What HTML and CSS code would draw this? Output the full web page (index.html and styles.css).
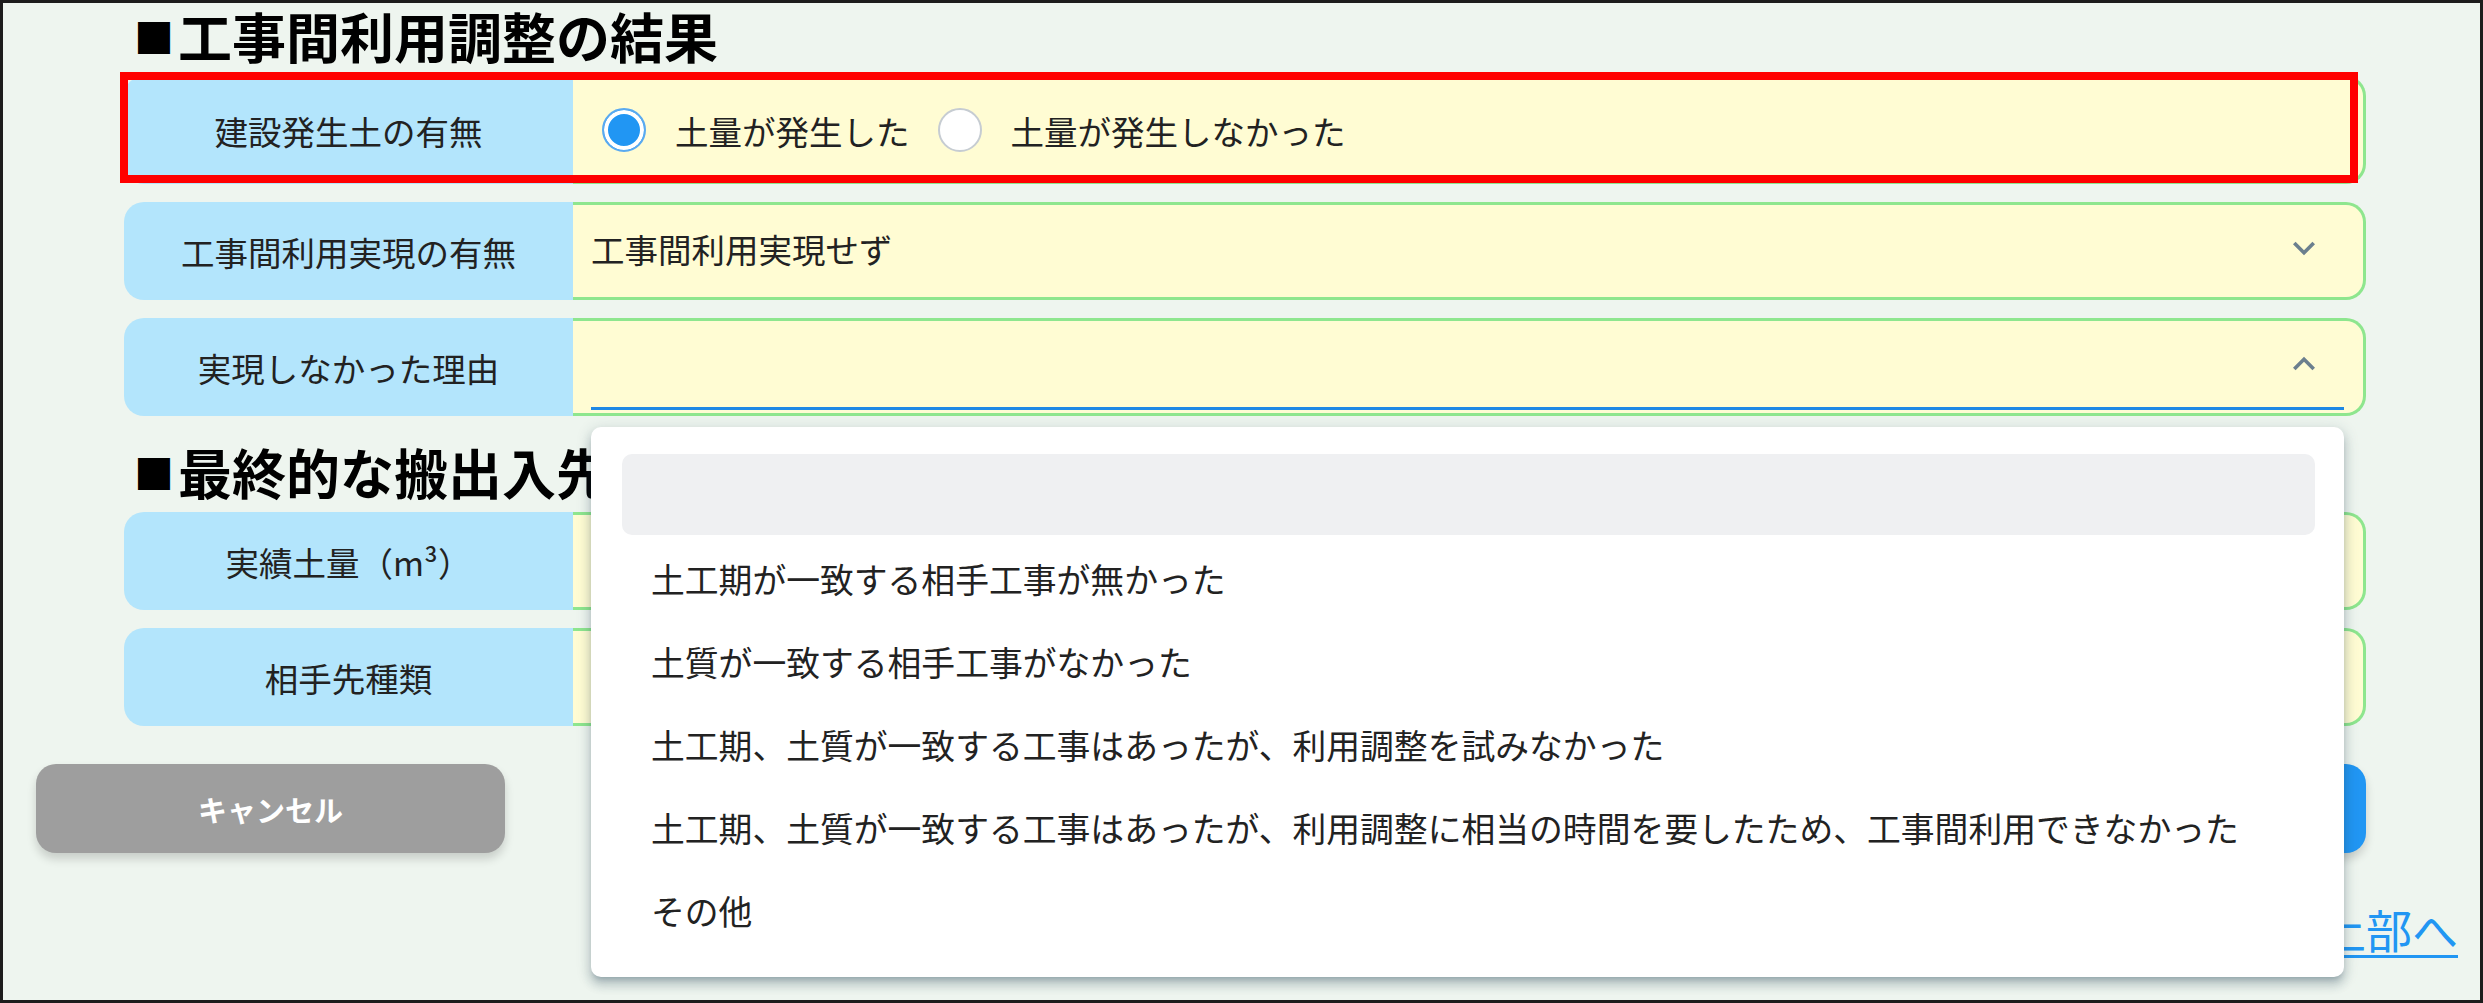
FILE: index.html
```html
<!DOCTYPE html>
<html lang="ja">
<head>
<meta charset="utf-8">
<title>工事間利用調整の結果</title>
<link rel="stylesheet" href="styles.css">
</head>
<body>
<div class="page">
  <main class="form">
    <h2 class="section-title"><span class="title-mark">■</span>工事間利用調整の結果</h2>

    <div class="field field--tall">
      <div class="field-label">建設発生土の有無</div>
      <div class="field-value field-value--radios">
        <label class="radio is-checked"><span class="radio-mark"></span>土量が発生した</label>
        <label class="radio"><span class="radio-mark"></span>土量が発生しなかった</label>
      </div>
    </div>

    <div class="field">
      <div class="field-label">工事間利用実現の有無</div>
      <div class="field-value">
        <div class="select-slot">
          <span class="select-text">工事間利用実現せず</span>
          <svg class="chevron" viewBox="0 0 24 24"><path d="M7.41,8.58L12,13.17L16.59,8.58L18,10L12,16L6,10L7.41,8.58Z"/></svg>
        </div>
      </div>
    </div>

    <div class="field">
      <div class="field-label">実現しなかった理由</div>
      <div class="field-value">
        <div class="select-slot is-focused">
          <span class="select-text"></span>
          <svg class="chevron" viewBox="0 0 24 24"><path d="M7.41,15.41L12,10.83L16.59,15.41L18,14L12,8L6,14L7.41,15.41Z"/></svg>
        </div>
      </div>
    </div>

    <h2 class="section-title section-title--second"><span class="title-mark">■</span>最終的な搬出入先</h2>

    <div class="field">
      <div class="field-label">実績土量（m³）</div>
      <div class="field-value"></div>
    </div>

    <div class="field">
      <div class="field-label">相手先種類</div>
      <div class="field-value"></div>
    </div>
  </main>

  <div class="actions">
    <button class="btn btn--cancel" type="button">キャンセル</button>
    <button class="btn btn--primary" type="button">登録</button>
  </div>

  <div class="to-top"><a href="#">ページ上部へ</a></div>

  <!-- attention frame drawn around the first field -->
  <div class="highlight-frame"></div>

  <!-- open list of the 実現しなかった理由 select -->
  <div class="menu">
    <ul class="menu-list">
      <li class="menu-item menu-item--blank"></li>
      <li class="menu-item">土工期が一致する相手工事が無かった</li>
      <li class="menu-item">土質が一致する相手工事がなかった</li>
      <li class="menu-item">土工期、土質が一致する工事はあったが、利用調整を試みなかった</li>
      <li class="menu-item">土工期、土質が一致する工事はあったが、利用調整に相当の時間を要したため、工事間利用できなかった</li>
      <li class="menu-item">その他</li>
    </ul>
  </div>
</div>
</body>
</html>
```

FILE: styles.css
```css
html, body {
  margin: 0;
  padding: 0;
}

body {
  font-family: "Noto Sans CJK JP", "Noto Sans", sans-serif;
  color: #222;
}

.page {
  position: relative;
  box-sizing: border-box;
  width: 2483px;
  height: 1003px;
  border: 3px solid #1c1c1c;
  background: #eef5ef;
  overflow: hidden;
}

/* ---------- form column ---------- */
.form {
  padding: 3px 114px 0 121px;
}

.section-title {
  height: 60px;
  margin: 0 0 10px;
  font-size: 54px;
  line-height: 60px;
  font-weight: 700;
  color: #000;
  letter-spacing: 0;
  white-space: nowrap;
}

.title-mark {
  display: inline-block;
  margin: 0 4px 0 10px;
  font-size: 40px;
  line-height: 60px;
  vertical-align: top;
}

.section-title--second {
  margin-top: 26px;
}

.field {
  display: flex;
  height: 98px;
  margin-bottom: 18px;
}

.field--tall {
  height: 108px;
}

.field-label {
  flex: 0 0 449px;
  display: flex;
  align-items: center;
  justify-content: center;
  background: #b3e5fc;
  border-radius: 20px 0 0 20px;
  font-size: 33.5px;
  color: #222;
}

.field-value {
  flex: 1;
  display: flex;
  align-items: stretch;
  box-sizing: border-box;
  padding: 0 19px 3px 18px;
  background: #fffcd3;
  border: 3px solid #8ee68e;
  border-left: 0;
  border-radius: 0 20px 20px 0;
}

/* ---------- radios ---------- */
.field-value--radios {
  align-items: center;
  padding: 0 0 0 29px;
}

.radio {
  display: flex;
  align-items: center;
  margin-right: 28px;
  font-size: 33.5px;
  color: #222;
}

.radio-mark {
  box-sizing: border-box;
  width: 44px;
  height: 44px;
  margin-right: 29px;
  border-radius: 50%;
  border: 2px solid #c6ccd2;
  background: #fff;
}

.radio.is-checked .radio-mark {
  border-color: #5aaaf0;
  background: #2196f3;
  box-shadow: inset 0 0 0 4px #fff;
}

/* ---------- selects ---------- */
.select-slot {
  flex: 1;
  display: flex;
  align-items: center;
  border-bottom: 3px solid transparent;
}

.select-slot.is-focused {
  border-bottom-color: #1e88e5;
}

.select-text {
  flex: 1;
  font-size: 33.5px;
  color: #222;
}

.chevron {
  width: 44px;
  height: 44px;
  margin-right: 18px;
  fill: #6b7f8e;
}

/* ---------- buttons ---------- */
.actions {
  display: flex;
  justify-content: space-between;
  margin-top: 38px;
  padding: 0 114px 0 33px;
}

.btn {
  width: 469px;
  height: 89px;
  border: 0;
  border-radius: 20px;
  font-family: inherit;
  font-size: 29px;
  font-weight: 700;
  color: #fff;
  box-shadow: 0 6px 10px rgba(0, 0, 0, 0.16);
}

.btn--cancel {
  background: #9e9e9e;
}

.btn--primary {
  background: #2196f3;
}

/* ---------- page-top link ---------- */
.to-top {
  margin-top: 52px;
  padding-right: 22px;
  text-align: right;
  font-size: 46px;
  line-height: 46px;
}

.to-top a {
  color: #2196f3;
  text-decoration: underline;
  text-decoration-thickness: 3px;
  text-underline-offset: 7px;
}

/* ---------- attention frame ---------- */
.highlight-frame {
  position: absolute;
  left: 117px;
  top: 69px;
  box-sizing: border-box;
  width: 2238px;
  height: 111px;
  border: 8px solid #ff0000;
}

/* ---------- dropdown menu ---------- */
.menu {
  position: absolute;
  left: 588px;
  top: 424px;
  box-sizing: border-box;
  width: 1753px;
  height: 550px;
  background: #fff;
  border-radius: 10px;
  box-shadow: 0 5px 5px -3px rgba(40, 70, 90, 0.25),
              0 8px 10px 1px rgba(40, 70, 90, 0.18),
              0 3px 14px 2px rgba(40, 70, 90, 0.15);
}

.menu-list {
  list-style: none;
  margin: 0;
  padding: 27px 29px 25px 31px;
}

.menu-item {
  display: flex;
  align-items: center;
  height: 83px;
  padding-left: 29px;
  font-size: 33.8px;
  color: #222;
  white-space: nowrap;
}

.menu-item--blank {
  height: 81px;
  margin-bottom: 2px;
  background: #eff0f2;
  border-radius: 10px;
}
```
